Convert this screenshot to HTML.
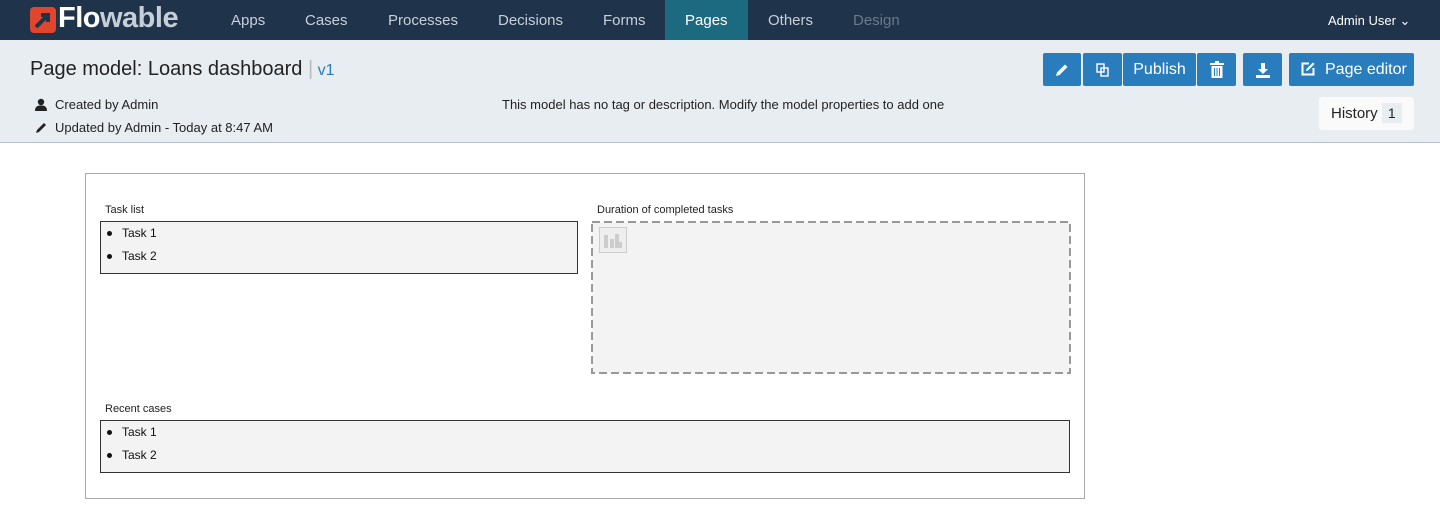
<!DOCTYPE html>
<html><head><style>
*{box-sizing:border-box;margin:0;padding:0}
body{width:1440px;height:509px;background:#fff;font-family:"Liberation Sans",Arial,sans-serif;position:relative;overflow:hidden}
.nav{position:absolute;left:0;top:0;width:1440px;height:40px;background:#1f334a}
.nav a{position:absolute;top:1px;height:40px;line-height:40px;color:#c7d0da;font-size:15px}
.hdr{position:absolute;top:40px;left:0;width:1440px;height:103px;background:#e8edf1;border-bottom:1px solid #b7c3cf}
.btn{position:absolute;top:53px;height:33px;background:#2a7dbd;color:#fff;font-size:16px;line-height:34px;text-align:center;border-radius:2px}
.btn svg{position:absolute;left:50%;top:50%;transform:translate(-50%,-50%)}
.t{position:absolute;font-size:13px;color:#222}
.t svg{position:absolute;left:-21px;top:1px}
.box{position:absolute;background:#f3f3f3;border:1px solid #333}
.li{position:absolute;font-size:12px;color:#111}
.li:before{content:"";position:absolute;left:-15px;top:5px;width:5px;height:5px;border-radius:50%;background:#111}
.lbl{position:absolute;font-size:11px;color:#222}
</style></head><body>
<div class="nav">
<svg style="position:absolute;left:30px;top:7px" width="26" height="26" viewBox="0 0 26 26"><rect x="0" y="0" width="26" height="26" rx="4" fill="#e0462e"/><path d="M6 20 L18 8 M11 8 H18 V15" stroke="#1f334a" stroke-width="4" fill="none"/></svg>
<div style="position:absolute;left:58px;top:2px;font-size:29px;font-weight:bold;color:#fff;letter-spacing:-0.5px">Flo<span style="color:#c6cfd7">wable</span></div>
<a style="left:231px">Apps</a><a style="left:305px">Cases</a><a style="left:388px">Processes</a><a style="left:498px">Decisions</a><a style="left:603px">Forms</a>
<div style="position:absolute;left:665px;top:0;width:83px;height:40px;background:#1c6a80"></div>
<a style="left:685px;color:#fff">Pages</a><a style="left:768px">Others</a><a style="left:853px;color:#6a7a8c">Design</a>
<a style="left:1328px;color:#fff;font-size:13px">Admin User ⌄</a>
</div>
<div class="hdr"></div>
<div style="position:absolute;left:30px;top:58px;font-size:20px;color:#222">Page model: Loans dashboard <span style="color:#bbb">|</span><span style="color:#2a7dbd;font-size:16px"> v1</span></div>
<div class="t" style="left:55px;top:97px"><svg width="14" height="14" viewBox="0 0 14 14"><circle cx="7" cy="4" r="3.2" fill="#222"/><path d="M1 13 C1 8 4 7.5 7 7.5 C10 7.5 13 8 13 13Z" fill="#222"/></svg>Created by Admin</div>
<div class="t" style="left:55px;top:120px"><svg width="14" height="14" viewBox="0 0 14 14"><path d="M2 12 L3 9 L10 2 L12 4 L5 11Z" fill="#222"/></svg>Updated by Admin - Today at 8:47 AM</div>
<div class="t" style="left:502px;top:97px">This model has no tag or description. Modify the model properties to add one</div>
<div class="btn" style="left:1043px;width:38px"><svg width="16" height="16" viewBox="0 0 16 16"><path d="M2 14 L3 10.5 L11 2.5 L13.5 5 L5.5 13Z" fill="#fff"/></svg></div>
<div class="btn" style="left:1083px;width:39px"><svg width="16" height="16" viewBox="0 0 16 16" fill="none" stroke="#fff" stroke-width="1.4"><rect x="2" y="2" width="7" height="8"/><rect x="6" y="6" width="7" height="8"/></svg></div>
<div class="btn" style="left:1123px;width:73px">Publish</div>
<div class="btn" style="left:1197px;width:39px"><svg width="16" height="18" viewBox="0 0 16 18" fill="#fff"><rect x="1" y="2" width="14" height="2"/><rect x="6" y="0" width="4" height="2"/><path d="M2.5 5 H13.5 V17 H2.5Z M5 7 V15 H6 V7Z M7.5 7 V15 H8.5 V7Z M10 7 V15 H11 V7Z" fill-rule="evenodd"/></svg></div>
<div class="btn" style="left:1243px;width:39px"><svg width="16" height="16" viewBox="0 0 16 16" fill="#fff"><path d="M6 1 H10 V7 H13 L8 12 L3 7 H6Z"/><rect x="1" y="13" width="14" height="3"/></svg></div>
<div class="btn" style="left:1289px;width:125px;text-align:left;padding-left:36px">Page editor</div>
<svg style="position:absolute;left:1300px;top:61px" width="16" height="16" viewBox="0 0 16 16"><path d="M9 2.5 H2.5 V13.5 H13.5 V7" fill="none" stroke="#fff" stroke-width="2"/><path d="M6 10 L6.5 8 L13 1.5 L14.5 3 L8 9.5Z" fill="#fff"/></svg>
<div style="position:absolute;left:1319px;top:97px;width:95px;height:33px;background:#fafafa;border-radius:3px;font-size:15px;line-height:33px;padding-left:12px;color:#222">History <span style="background:#e8edf1;padding:2px 6px;font-size:14px">1</span></div>
<div style="position:absolute;left:85px;top:173px;width:1000px;height:326px;border:1px solid #aaa"></div>
<div class="lbl" style="left:105px;top:204px">Task list</div>
<div class="box" style="left:100px;top:221px;width:478px;height:53px"></div>
<div class="li" style="left:122px;top:226px">Task 1</div><div class="li" style="left:122px;top:249px">Task 2</div>
<div class="lbl" style="left:597px;top:204px">Duration of completed tasks</div>
<svg style="position:absolute;left:591px;top:221px" width="480" height="153"><rect x="1" y="1" width="478" height="151" fill="#f3f3f3" stroke="#999" stroke-width="2" stroke-dasharray="8,4"/></svg>
<div style="position:absolute;left:599px;top:227px;width:28px;height:26px;border:1px solid #ccc;background:#eee"></div>
<svg style="position:absolute;left:602px;top:230px" width="22" height="20"><rect x="2" y="5" width="4" height="13" fill="#ccc"/><rect x="8" y="9" width="4" height="9" fill="#ccc"/><rect x="13" y="4" width="4" height="14" fill="#ccc"/><rect x="17" y="12" width="3" height="6" fill="#ccc"/></svg>
<div class="lbl" style="left:105px;top:403px">Recent cases</div>
<div class="box" style="left:100px;top:420px;width:970px;height:53px"></div>
<div class="li" style="left:122px;top:425px">Task 1</div><div class="li" style="left:122px;top:448px">Task 2</div>
</body></html>
